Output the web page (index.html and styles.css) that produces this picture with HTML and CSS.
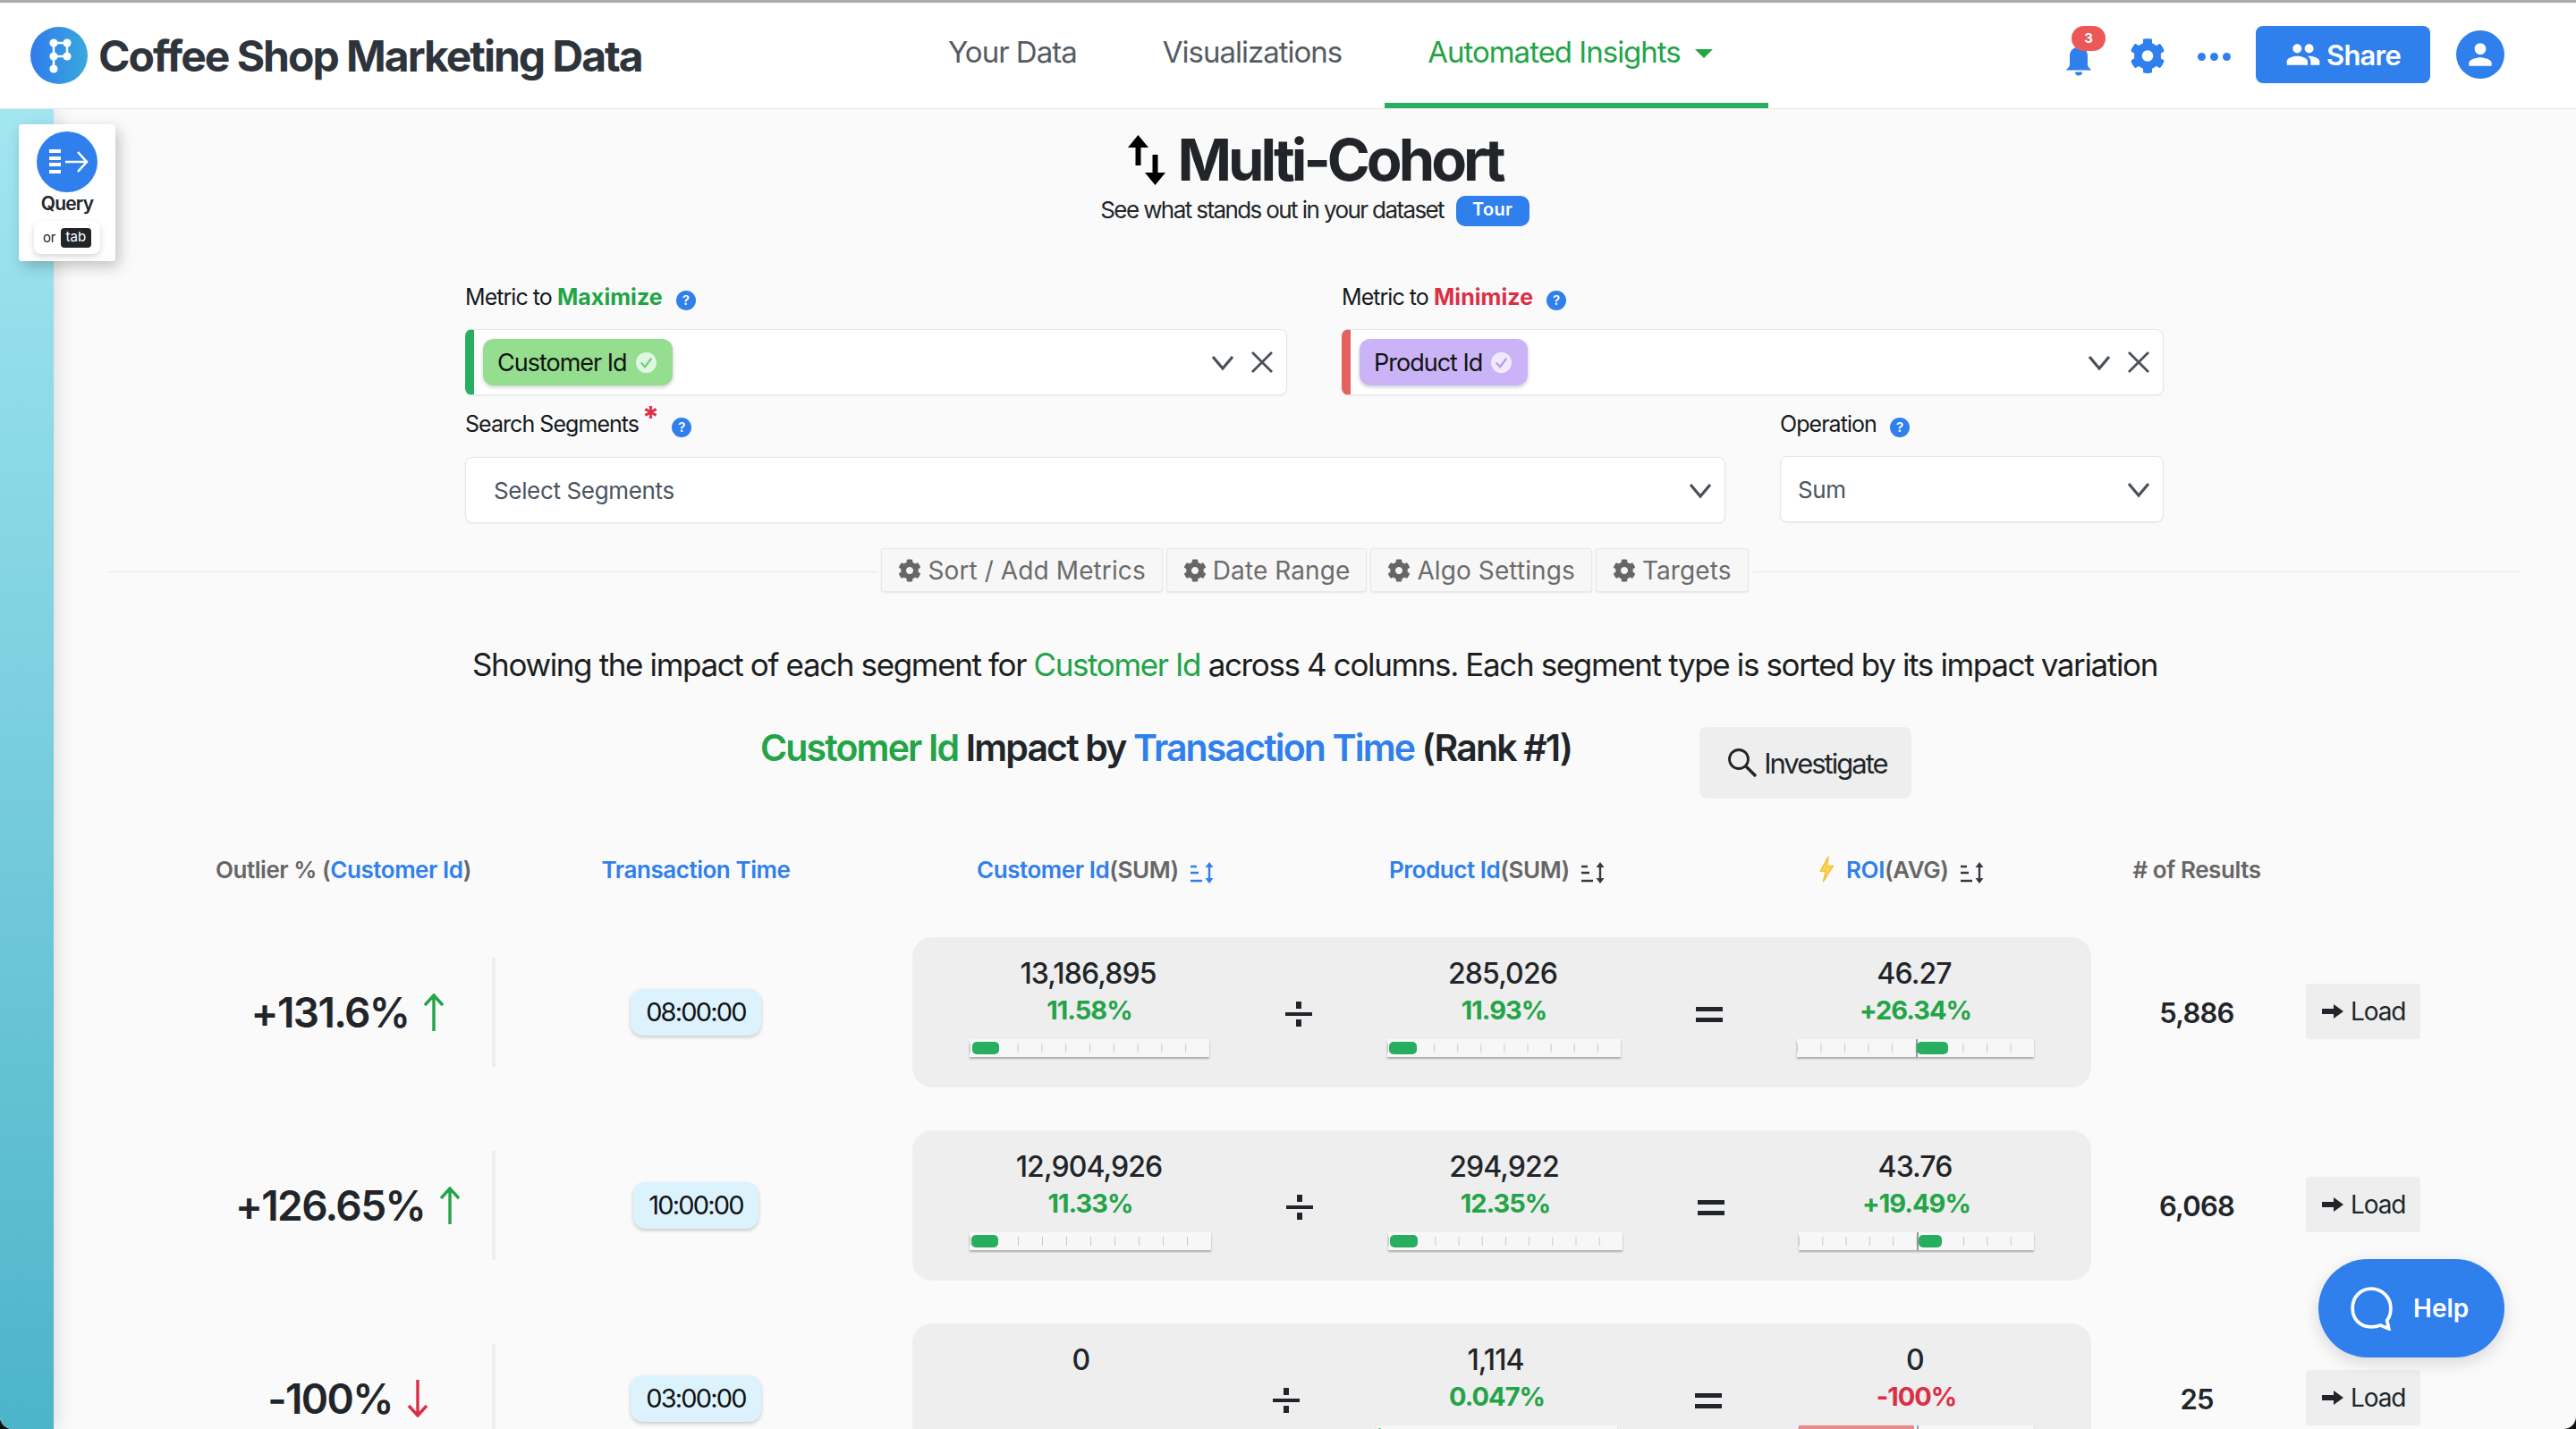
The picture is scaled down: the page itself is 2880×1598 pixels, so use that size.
FILE: index.html
```html
<!DOCTYPE html>
<html>
<head>
    <title>Coffee Shop Marketing Data</title>
    <meta charset="utf-8">
    <link rel="stylesheet" href="styles.css">
</head>
<body>
<svg class="defs" width="0" height="0">
    <symbol id="cog" viewBox="0 0 512 512"><path d="M487.4 315.7l-42.6-24.6c4.3-23.2 4.3-47 0-70.2l42.6-24.6c4.9-2.8 7.1-8.6 5.5-14-11.1-35.6-30-67.8-54.7-94.6-3.8-4.1-10-5.1-14.8-2.3L380.8 110c-17.9-15.4-38.5-27.3-60.8-35.1V25.8c0-5.6-3.9-10.5-9.4-11.7-36.7-8.2-74.3-7.8-109.2 0-5.5 1.2-9.4 6.1-9.4 11.7V75c-22.2 7.9-42.8 19.8-60.8 35.1L88.7 85.5c-4.9-2.8-11-1.9-14.8 2.3-24.7 26.7-43.6 58.9-54.7 94.6-1.7 5.4.6 11.2 5.5 14L67.3 221c-4.3 23.2-4.3 47 0 70.2l-42.6 24.6c-4.9 2.8-7.1 8.6-5.5 14 11.1 35.6 30 67.8 54.7 94.6 3.8 4.1 10 5.1 14.8 2.3l42.6-24.6c17.9 15.4 38.5 27.3 60.8 35.1v49.2c0 5.6 3.9 10.5 9.4 11.7 36.7 8.2 74.3 7.8 109.2 0 5.5-1.2 9.4-6.1 9.4-11.7v-49.2c22.2-7.9 42.8-19.8 60.8-35.1l42.6 24.6c4.9 2.8 11 1.9 14.8-2.3 24.7-26.7 43.6-58.9 54.7-94.6 1.5-5.5-.7-11.3-5.6-14.1zM256 336c-44.1 0-80-35.9-80-80s35.9-80 80-80 80 35.9 80 80-35.9 80-80 80z"/></symbol>
    <symbol id="chev" viewBox="0 0 24 24"><path d="M1 6l11 13L23 6" fill="none" stroke="currentColor" stroke-width="3.2"/></symbol>
    <symbol id="cross" viewBox="0 0 24 24"><path d="M1 1l22 22M23 1L1 23" fill="none" stroke="currentColor" stroke-width="2.8"/></symbol>
    <symbol id="sort" viewBox="0 0 28 24"><path d="M1 5h7M1 12h9M1 21h13" fill="none" stroke="currentColor" stroke-width="2.4"/><path d="M22 4v16" fill="none" stroke="currentColor" stroke-width="2.4"/><path d="M22 0l4.5 6h-9zM22 24l4.5-6h-9z" fill="currentColor"/></symbol>
    <symbol id="up" viewBox="0 0 24 42"><path d="M12 42V3M2 13L12 2l10 11" fill="none" stroke="currentColor" stroke-width="3.4"/></symbol>
    <symbol id="down" viewBox="0 0 24 42"><path d="M12 0v39M2 29l10 11 10-11" fill="none" stroke="currentColor" stroke-width="3.4"/></symbol>
    <symbol id="go" viewBox="0 0 24 16"><path d="M0 5h13V0l11 8-11 8v-5H0z" fill="currentColor"/></symbol>
</svg>

<div class="page">
    <header class="topbar">
        <div class="brand">
            <svg class="logo" viewBox="0 0 64 64">
                <defs><linearGradient id="logoFill" x1="0" y1="0" x2="1" y2="0"><stop offset="0" stop-color="#2f7bed"/><stop offset="1" stop-color="#3aa9dc"/></linearGradient></defs>
                <circle cx="32" cy="32" r="32" fill="url(#logoFill)"/>
                <path d="M26 18h15v15H26M26 18v29" fill="none" stroke="#fff" stroke-width="2.5"/>
                <g fill="#fff"><circle cx="26" cy="18" r="4.6"/><circle cx="41" cy="18" r="4.6"/><circle cx="26" cy="33" r="4.6"/><circle cx="41" cy="33" r="4.6"/><circle cx="26" cy="47" r="4.6"/></g>
            </svg>
            <span class="brand-name">Coffee Shop Marketing Data</span>
        </div>
        <nav class="tabs">
            <a class="tab">Your Data</a>
            <a class="tab">Visualizations</a>
            <a class="tab tab-active">Automated Insights <i class="caret"></i></a>
        </nav>
        <div class="actions">
            <span class="bell">
                <svg viewBox="0 0 32 34" width="32" height="34"><path d="M2 27.5c0-1 3-2.500 4-5.500V12C6 5 10 2 16 2s10 3 10 10v10c1 3 4 4.500 4 5.500zM12 29.500h8a4 4 0 0 1-8 0z" fill="#2f7fed"/></svg>
                <b class="bell-count">3</b>
            </span>
            <svg class="gear" width="40" height="41" fill="#2f7fed"><use href="#cog"/></svg>
            <span class="dots"><i></i><i></i><i></i></span>
            <button class="share">
                <svg viewBox="0 0 24 24" width="40" height="40" fill="#fff"><path d="M16 11c1.66 0 2.99-1.34 2.99-3S17.66 5 16 5c-1.66 0-3 1.34-3 3s1.34 3 3 3zm-8 0c1.66 0 2.99-1.34 2.99-3S9.66 5 8 5C6.34 5 5 6.34 5 8s1.34 3 3 3zm0 2c-2.33 0-7 1.17-7 3.5V19h14v-2.5c0-2.33-4.67-3.5-7-3.5zm8 0c-.29 0-.62.02-.97.05 1.16.84 1.97 1.97 1.97 3.45V19h6v-2.5c0-2.33-4.67-3.5-7-3.5z"/></svg>
                Share
            </button>
            <span class="avatar">
                <svg viewBox="0 0 24 24" width="38" height="38" fill="#fff"><path d="M12 12c2.21 0 4-1.79 4-4s-1.79-4-4-4-4 1.79-4 4 1.79 4 4 4zm0 2c-2.67 0-8 1.34-8 4v2h16v-2c0-2.66-5.33-4-8-4z"/></svg>
            </span>
        </div>
    </header>

    <div class="workspace">
        <aside class="rail"></aside>
        <div class="query-card">
            <span class="query-btn">
                <svg viewBox="0 0 68 68" width="68" height="68"><path d="M14 22h13M14 30h13M14 37h13M14 45h13" stroke="#fff" stroke-width="4" fill="none"/><path d="M32 34h23M46 23l10 11-10 11" stroke="#fff" stroke-width="2.6" fill="none"/></svg>
            </span>
            <span class="query-label">Query</span>
            <span class="query-hint">or <kbd>tab</kbd></span>
        </div>

        <main class="content">
            <div class="title-block">
                <h1 class="title">
                    <svg viewBox="0 0 44 56" width="44" height="56"><path d="M12.5 0L24 14h-8.5v20h-6V14H1zM31.5 56L20 42h8.5V22h6v20H43z" fill="#000"/></svg>
                    Multi-Cohort
                </h1>
                <p class="subtitle">See what stands out in your dataset <span class="tour">Tour</span></p>
            </div>

            <section class="query-form">
                <div class="form-row">
                    <div class="field">
                        <label class="field-label">Metric to <b class="txt-green">Maximize</b> <i class="hint">?</i></label>
                        <div class="box box-max">
                            <span class="chip chip-green">Customer Id
                                <svg class="chip-check" viewBox="0 0 24 24"><circle cx="12" cy="12" r="12" fill="#fff" opacity=".72"/><path d="M6 12l4.5 5L18 7" fill="none" stroke="#6fcf7a" stroke-width="2.4"/></svg>
                            </span>
                            <svg class="chev" width="24" height="24"><use href="#chev"/></svg>
                            <svg class="cross" width="24" height="24"><use href="#cross"/></svg>
                        </div>
                    </div>
                    <div class="field">
                        <label class="field-label">Metric to <b class="txt-red">Minimize</b> <i class="hint">?</i></label>
                        <div class="box box-min">
                            <span class="chip chip-purple">Product Id
                                <svg class="chip-check" viewBox="0 0 24 24"><circle cx="12" cy="12" r="12" fill="#fff" opacity=".72"/><path d="M6 12l4.5 5L18 7" fill="none" stroke="#b79cf0" stroke-width="2.4"/></svg>
                            </span>
                            <svg class="chev" width="24" height="24"><use href="#chev"/></svg>
                            <svg class="cross" width="24" height="24"><use href="#cross"/></svg>
                        </div>
                    </div>
                </div>
                <div class="form-row form-row-2">
                    <div class="field">
                        <label class="field-label">Search Segments<sup class="star">*</sup> <i class="hint">?</i></label>
                        <div class="box box-plain">
                            <span class="placeholder">Select Segments</span>
                            <svg class="chev" width="24" height="24"><use href="#chev"/></svg>
                        </div>
                    </div>
                    <div class="field field-op">
                        <label class="field-label">Operation <i class="hint">?</i></label>
                        <div class="box box-op">
                            <span class="placeholder">Sum</span>
                            <svg class="chev" width="24" height="24"><use href="#chev"/></svg>
                        </div>
                    </div>
                </div>
            </section>

            <div class="toolbar">
                <span class="rule"></span>
                <button class="tool"><svg width="26" height="28" fill="#666"><use href="#cog"/></svg>Sort / Add Metrics</button>
                <button class="tool"><svg width="26" height="28" fill="#666"><use href="#cog"/></svg>Date Range</button>
                <button class="tool"><svg width="26" height="28" fill="#666"><use href="#cog"/></svg>Algo Settings</button>
                <button class="tool"><svg width="26" height="28" fill="#666"><use href="#cog"/></svg>Targets</button>
                <span class="rule"></span>
            </div>

            <p class="summary">Showing the impact of each segment for <span class="txt-green">Customer Id</span> across 4 columns. Each segment type is sorted by its impact variation</p>

            <div class="impact-head">
                <h2 class="impact-title"><span class="txt-green">Customer Id</span> Impact by <span class="txt-blue">Transaction Time</span> (Rank #1)</h2>
                <button class="investigate">
                    <svg viewBox="0 0 36 36" width="36" height="36"><circle cx="14" cy="14" r="10.5" fill="none" stroke="#212529" stroke-width="2.8"/><path d="M21.5 21.5L33 33" stroke="#212529" stroke-width="3.4"/></svg>
                    Investigate
                </button>
            </div>

            <div class="table-head">
                <div class="th th-outlier">Outlier % (<span class="txt-blue">Customer Id</span>)</div>
                <div class="th th-segment txt-blue">Transaction Time</div>
                <div class="th-metrics">
                    <div class="th"><span class="txt-blue">Customer Id</span>(SUM) <svg class="sort txt-blue" width="28" height="24"><use href="#sort"/></svg></div>
                    <div class="th"><span class="txt-blue">Product Id</span>(SUM) <svg class="sort" width="28" height="24"><use href="#sort"/></svg></div>
                    <div class="th">
                        <svg class="bolt" viewBox="0 0 24 40" width="24" height="30"><path d="M15 1L3 23h8L7 39l15-24h-9z" fill="#fbd34d" stroke="#f2b632" stroke-width="1.5"/></svg>
                        <span class="txt-blue">ROI</span>(AVG) <svg class="sort" width="28" height="24"><use href="#sort"/></svg>
                    </div>
                </div>
                <div class="th th-results"># of Results</div>
            </div>

            <div class="row">
                <div class="outlier">+131.6% <svg class="txt-green" width="24" height="42"><use href="#up"/></svg></div>
                <div class="segment"><span class="pill">08:00:00</span></div>
                <div class="panel panel-r1">
                    <div class="metric">
                        <div class="value">13,186,895</div>
                        <div class="pct txt-green">11.58%</div>
                        <div class="bar"><i class="fill" style="left:3px;width:30px"></i></div>
                    </div>
                    <div class="op"><i class="op-div"></i></div>
                    <div class="metric">
                        <div class="value">285,026</div>
                        <div class="pct txt-green">11.93%</div>
                        <div class="bar"><i class="fill" style="left:2px;width:31px"></i></div>
                    </div>
                    <div class="op"><i class="op-eq"></i></div>
                    <div class="metric">
                        <div class="value">46.27</div>
                        <div class="pct txt-green">+26.34%</div>
                        <div class="bar bar-zero"><i class="fill" style="left:134px;width:35px"></i></div>
                    </div>
                </div>
                <div class="results">5,886</div>
                <button class="load"><svg width="24" height="16"><use href="#go"/></svg>Load</button>
            </div>

            <div class="row">
                <div class="outlier">+126.65% <svg class="txt-green" width="24" height="42"><use href="#up"/></svg></div>
                <div class="segment"><span class="pill">10:00:00</span></div>
                <div class="panel panel-r2">
                    <div class="metric">
                        <div class="value">12,904,926</div>
                        <div class="pct txt-green">11.33%</div>
                        <div class="bar"><i class="fill" style="left:2px;width:30px"></i></div>
                    </div>
                    <div class="op"><i class="op-div"></i></div>
                    <div class="metric">
                        <div class="value">294,922</div>
                        <div class="pct txt-green">12.35%</div>
                        <div class="bar"><i class="fill" style="left:2px;width:31px"></i></div>
                    </div>
                    <div class="op"><i class="op-eq"></i></div>
                    <div class="metric">
                        <div class="value">43.76</div>
                        <div class="pct txt-green">+19.49%</div>
                        <div class="bar bar-zero"><i class="fill" style="left:134px;width:26px"></i></div>
                    </div>
                </div>
                <div class="results">6,068</div>
                <button class="load"><svg width="24" height="16"><use href="#go"/></svg>Load</button>
            </div>

            <div class="row">
                <div class="outlier">-100% <svg class="txt-red" width="24" height="42"><use href="#down"/></svg></div>
                <div class="segment"><span class="pill">03:00:00</span></div>
                <div class="panel panel-r3">
                    <div class="metric">
                        <div class="value">0</div>
                    </div>
                    <div class="op"><i class="op-div"></i></div>
                    <div class="metric">
                        <div class="value">1,114</div>
                        <div class="pct txt-green">0.047%</div>
                        <div class="bar"><i class="fill" style="left:2px;width:3px"></i></div>
                    </div>
                    <div class="op"><i class="op-eq"></i></div>
                    <div class="metric">
                        <div class="value">0</div>
                        <div class="pct txt-red">-100%</div>
                        <div class="bar bar-zero"><i class="fill fill-red" style="left:0;width:129px"></i></div>
                    </div>
                </div>
                <div class="results">25</div>
                <button class="load"><svg width="24" height="16"><use href="#go"/></svg>Load</button>
            </div>
        </main>
    </div>

    <button class="help">
        <svg viewBox="0 0 48 48" width="50" height="50"><path d="M24 3C12.5 3 4 12 4 24s8.500 20 20 20c3.500 0 7-.6 10-1.800L43 46l-2-9c3-3.500 4-8 4-13C45 12 35.500 3 24 3z" fill="none" stroke="#fff" stroke-width="3.6"/></svg>
        Help
    </button>
</div>
</body>
</html>
```

FILE: styles.css
```css
* {
    box-sizing: border-box;
}

html, body {
    margin: 0;
    height: 100%;
    background: #111;
}

body {
    overflow: hidden;
    font-family: "Inter", "Liberation Sans", sans-serif;
    color: #212529;
}

.defs {
    position: absolute;
}

button {
    font-family: inherit;
    border: none;
    cursor: pointer;
}

.txt-green { color: #22a447; }
.txt-red { color: #dc2f45; }
.txt-blue { color: #2f7fed; }

.page {
    position: relative;
    height: 1598px;
    overflow: hidden;
    background: #fafafa;
    border-radius: 0 0 14px 14px;
}

/* top bar */
.topbar {
    display: grid;
    grid-template-columns: 1012px auto 1fr;
    height: 122px;
    background: #fff;
    border-top: 3px solid #aaa;
    border-bottom: 1px solid #e8e8e8;
    position: relative;
    z-index: 2;
}

.brand {
    display: flex;
    align-items: center;
    gap: 12px;
    padding: 0 0 0 34px;
}

.logo {
    width: 64px;
    height: 64px;
}

.brand-name {
    font-size: 48px;
    font-weight: 700;
    letter-spacing: -2px;
    color: #2e343b;
}

.tabs {
    display: flex;
}

.tab {
    display: block;
    padding: 34px 48px 0;
    font-size: 33px;
    line-height: 42px;
    letter-spacing: -1px;
    color: #555b61;
}

.tab-active {
    color: #22a447;
    border-bottom: 6px solid #27ae60;
    padding-right: 62px;
}

.caret {
    display: inline-block;
    margin-left: 8px;
    vertical-align: 5px;
    border-left: 10px solid transparent;
    border-right: 10px solid transparent;
    border-top: 10px solid #22a447;
}

.actions {
    display: flex;
    align-items: center;
    justify-content: flex-end;
    padding: 0 80px 0 0;
    margin-top: -2px;
}

.bell {
    position: relative;
    margin-top: 14px;
    margin-right: 41px;
    height: 34px;
}

.bell-count {
    position: absolute;
    left: 8px;
    top: -22px;
    width: 38px;
    height: 28px;
    border-radius: 14px;
    background: #ec5858;
    color: #fff;
    font-size: 15px;
    line-height: 28px;
    text-align: center;
}

.gear {
    margin-top: 2px;
}

.dots {
    display: flex;
    gap: 5px;
    margin: 4px 28px 0 36px;
}

.dots i {
    width: 9px;
    height: 9px;
    border-radius: 50%;
    background: #2f7fed;
}

.share {
    display: flex;
    align-items: center;
    justify-content: center;
    gap: 6px;
    width: 195px;
    height: 64px;
    border-radius: 8px;
    background: #2f7fed;
    color: #fff;
    font-size: 31px;
    font-weight: 600;
    letter-spacing: -.8px;
}

.avatar {
    display: flex;
    align-items: center;
    justify-content: center;
    width: 54px;
    height: 54px;
    margin-left: 29px;
    border-radius: 50%;
    background: #2f7fed;
}

/* left rail + floating query card */
.workspace {
    display: flex;
    height: 1476px;
    position: relative;
}

.rail {
    flex: none;
    width: 60px;
    background: linear-gradient(#a2e6f1, #4db4c9);
    box-shadow: 4px 0 18px rgba(0, 0, 0, .12);
}

.query-card {
    position: absolute;
    left: 21px;
    top: 17px;
    width: 108px;
    height: 153px;
    display: flex;
    flex-direction: column;
    align-items: center;
    padding-top: 8px;
    background: #fff;
    border-radius: 3px;
    box-shadow: 4px 6px 16px rgba(0, 0, 0, .22);
}

.query-btn {
    display: block;
    width: 68px;
    height: 68px;
    border-radius: 50%;
    background: #2f7fed;
}

.query-label {
    margin-top: 0;
    font-size: 21px;
    line-height: 26px;
    font-weight: 600;
    letter-spacing: -.8px;
}

.query-hint {
    display: flex;
    align-items: center;
    justify-content: center;
    gap: 5px;
    width: 74px;
    height: 37px;
    margin-top: 6px;
    border-radius: 8px;
    background: #fff;
    box-shadow: 0 3px 7px rgba(0, 0, 0, .16);
    font-size: 15px;
}

.query-hint kbd {
    display: block;
    padding: 0 6px;
    height: 22px;
    line-height: 19px;
    border-radius: 4px;
    background: #212529;
    color: #fff;
    font-family: inherit;
    font-size: 15px;
}

/* heading */
.content {
    flex: 1;
    min-width: 0;
}

.title-block {
    text-align: center;
    padding-top: 17px;
}

.title {
    display: flex;
    align-items: center;
    justify-content: center;
    gap: 12px;
    margin: 0;
    font-size: 65px;
    line-height: 79px;
    font-weight: 700;
    letter-spacing: -4px;
}

.subtitle {
    margin: 0;
    font-size: 26px;
    line-height: 34px;
    letter-spacing: -1.6px;
}

.tour {
    display: inline-block;
    width: 82px;
    height: 34px;
    margin-left: 8px;
    border-radius: 10px;
    background: #2f7fed;
    color: #fff;
    font-size: 20px;
    font-weight: 600;
    line-height: 30px;
    letter-spacing: .3px;
    vertical-align: 3px;
}

/* form */
.query-form {
    margin: 62px 0 0 460px;
    width: 1899px;
}

.form-row {
    display: grid;
    grid-template-columns: 919px 919px;
    gap: 61px;
}

.form-row-2 {
    grid-template-columns: 1409px 429px;
    margin-top: 15px;
}

.field-label {
    display: block;
    font-size: 25px;
    line-height: 34px;
    letter-spacing: -.95px;
    color: #16191c;
}

.field-label b {
    font-weight: 700;
    letter-spacing: .05px;
}

.star {
    color: #dc2f45;
    font-size: 34px;
    font-weight: 700;
    line-height: 0;
    margin-left: 4px;
    vertical-align: 4px;
}

.hint {
    display: inline-block;
    width: 22px;
    height: 22px;
    margin-left: 9px;
    border-radius: 50%;
    background: #2f7fed;
    color: #fff;
    font-size: 15px;
    font-style: normal;
    font-weight: 600;
    letter-spacing: 0;
    line-height: 22px;
    text-align: center;
    vertical-align: 0;
}

.box {
    display: flex;
    align-items: center;
    height: 74px;
    margin-top: 19px;
    padding-right: 15px;
    background: #fff;
    border: 1px solid #e6e6e6;
    border-radius: 8px;
    box-shadow: 0 1px 2px rgba(0, 0, 0, .06);
}

.box-max {
    border-left: 10px solid #27ae60;
    padding-left: 10px;
}

.box-min {
    border-left: 10px solid #e3625f;
    padding-left: 10px;
}

.box-plain {
    margin-top: 20px;
    padding: 0 15px 0 31px;
}

.box-op {
    margin-top: 19px;
    padding: 0 15px 0 19px;
}

.chip {
    display: flex;
    align-items: center;
    gap: 10px;
    height: 52px;
    padding: 0 18px 0 16px;
    border-radius: 12px;
    font-size: 27px;
    letter-spacing: -1px;
    color: #10140f;
    box-shadow: 0 2px 4px rgba(0, 0, 0, .2);
}

.chip-green { background: #95dd8f; }
.chip-purple { background: #cbb3f8; }

.chip-check {
    width: 23px;
    height: 23px;
}

.chev {
    margin-left: auto;
    color: #495057;
}

.cross {
    margin-left: 20px;
    color: #495057;
}

.placeholder {
    font-size: 26px;
    letter-spacing: -.35px;
    color: #4a5560;
}

/* settings buttons on the rule */
.toolbar {
    display: flex;
    align-items: center;
    gap: 4px;
    height: 49px;
    margin: 28px 62px 0;
}

.rule {
    flex: 1;
    height: 1px;
    margin-top: 3px;
    background: #e4e4e4;
}

.tool {
    display: flex;
    align-items: center;
    gap: 7px;
    height: 49px;
    padding: 0 18px;
    background: #f7f7f7;
    border: 1px solid #e8e8e8;
    border-radius: 3px;
    box-shadow: 0 1px 2px rgba(0, 0, 0, .08);
    color: #6b6b6b;
    font-size: 28px;
    letter-spacing: .1px;
}

.summary {
    margin: 57px 0 0;
    text-align: center;
    font-size: 35px;
    line-height: 48px;
    letter-spacing: -1.37px;
    color: #1b1e21;
}

.impact-head {
    display: flex;
    align-items: flex-start;
    gap: 143px;
    margin-top: 44px;
    padding-left: 790px;
}

.impact-title {
    margin: 0;
    font-size: 41px;
    line-height: 50px;
    font-weight: 600;
    letter-spacing: -1.85px;
    white-space: nowrap;
}

.investigate {
    display: flex;
    align-items: center;
    gap: 6px;
    width: 237px;
    height: 80px;
    margin-top: 2px;
    padding-left: 30px;
    border-radius: 8px;
    background: #eee;
    color: #212529;
    font-size: 31px;
    letter-spacing: -2px;
}

/* table */
.table-head,
.row {
    display: grid;
    grid-template-columns: 326px 466px 1318px 236px 128px;
    padding-left: 168px;
}

.table-head {
    margin-top: 63px;
    align-items: center;
}

.th {
    font-size: 26px;
    line-height: 34px;
    font-weight: 600;
    letter-spacing: -.45px;
    color: #666;
    white-space: nowrap;
}

.th-outlier {
    margin-left: -6px;
    text-align: center;
    width: 324px;
}

.th-segment {
    padding-right: 18px;
    text-align: center;
    color: #2f7fed;
}

.th-metrics {
    display: grid;
    grid-template-columns: 461px 477px 1fr;
    padding-left: 72px;
}

.th-results {
    text-align: center;
}

.sort {
    margin-left: 6px;
    vertical-align: -6px;
    color: #343a40;
}

.sort.txt-blue {
    color: #2f7fed;
}

.bolt {
    margin-right: 4px;
    vertical-align: -5px;
}

.row {
    align-items: center;
    margin-bottom: 48px;
}

.table-head + .row {
    margin-top: 58px;
}

.outlier {
    display: flex;
    align-items: center;
    justify-content: center;
    gap: 16px;
    height: 122px;
    border-right: 4px solid #eee;
    font-size: 46px;
    font-weight: 600;
    letter-spacing: -1.6px;
    color: #212529;
}

.segment {
    padding-right: 18px;
    text-align: center;
}

.pill {
    display: inline-block;
    height: 52px;
    padding: 0 17px;
    border-radius: 14px;
    background: #dcf3fe;
    box-shadow: 0 2px 4px rgba(0, 0, 0, .2);
    font-size: 29px;
    line-height: 52px;
    letter-spacing: -1.8px;
    color: #111;
}

.panel {
    display: grid;
    height: 168px;
    padding-left: 64px;
    background: #eee;
    border-radius: 22px;
}

.panel-r1 { grid-template-columns: 268px 199px 261px 197px 265px; }
.panel-r2 { grid-template-columns: 270px 198px 262px 197px 263px; }
.panel-r3 { grid-template-columns: 252px 203px 269px 203px 263px; }

.metric {
    padding-top: 25px;
    text-align: center;
}

.value {
    padding-right: 3px;
    font-size: 32px;
    line-height: 32px;
    font-weight: 500;
    letter-spacing: -.9px;
}

.pct {
    margin-top: 9px;
    font-size: 29px;
    line-height: 32px;
    font-weight: 700;
    letter-spacing: -1px;
}

.bar {
    position: relative;
    height: 20px;
    margin-top: 16px;
    background: linear-gradient(to right, #c9c9c9 1px, transparent 1px) 0 center / 10% 10px repeat-x #f7f7f7;
    box-shadow: 0 2px 2px rgba(0, 0, 0, .28);
}

.bar-zero::before {
    content: "";
    position: absolute;
    left: 50%;
    top: 0;
    width: 2px;
    height: 100%;
    background: #999;
}

.fill {
    position: absolute;
    top: 3px;
    height: 14px;
    border-radius: 5px;
    background: #27ae60;
}

.fill-red {
    top: 0;
    height: 20px;
    border-radius: 0;
    background: #ec8a8a;
}

.op {
    display: flex;
    align-items: center;
    justify-content: center;
    padding-top: 4px;
}

.op-div {
    position: relative;
    display: block;
    width: 30px;
    height: 4px;
    background: #212529;
}

.op-div::before,
.op-div::after {
    content: "";
    position: absolute;
    left: 12px;
    width: 6px;
    height: 8px;
    background: #212529;
}

.op-div::before { top: -12px; }
.op-div::after { bottom: -12px; }

.op-eq {
    display: block;
    width: 30px;
    height: 17px;
    border-top: 5px solid #212529;
    border-bottom: 5px solid #212529;
}

.results {
    text-align: center;
    font-size: 31px;
    font-weight: 600;
    letter-spacing: -.8px;
}

.load {
    display: flex;
    align-items: center;
    gap: 8px;
    width: 128px;
    height: 62px;
    margin-left: 4px;
    padding-left: 18px;
    margin-top: -2px;
    border-radius: 4px;
    background: #eee;
    color: #212529;
    font-size: 28px;
    letter-spacing: -1.1px;
}

.help {
    position: absolute;
    left: 2592px;
    top: 1408px;
    display: flex;
    align-items: center;
    gap: 22px;
    width: 208px;
    height: 110px;
    padding-left: 34px;
    border-radius: 55px;
    background: #2f7fed;
    box-shadow: 0 6px 18px rgba(0, 0, 0, .14);
    color: #fff;
    font-size: 28px;
    font-weight: 600;
}
```
